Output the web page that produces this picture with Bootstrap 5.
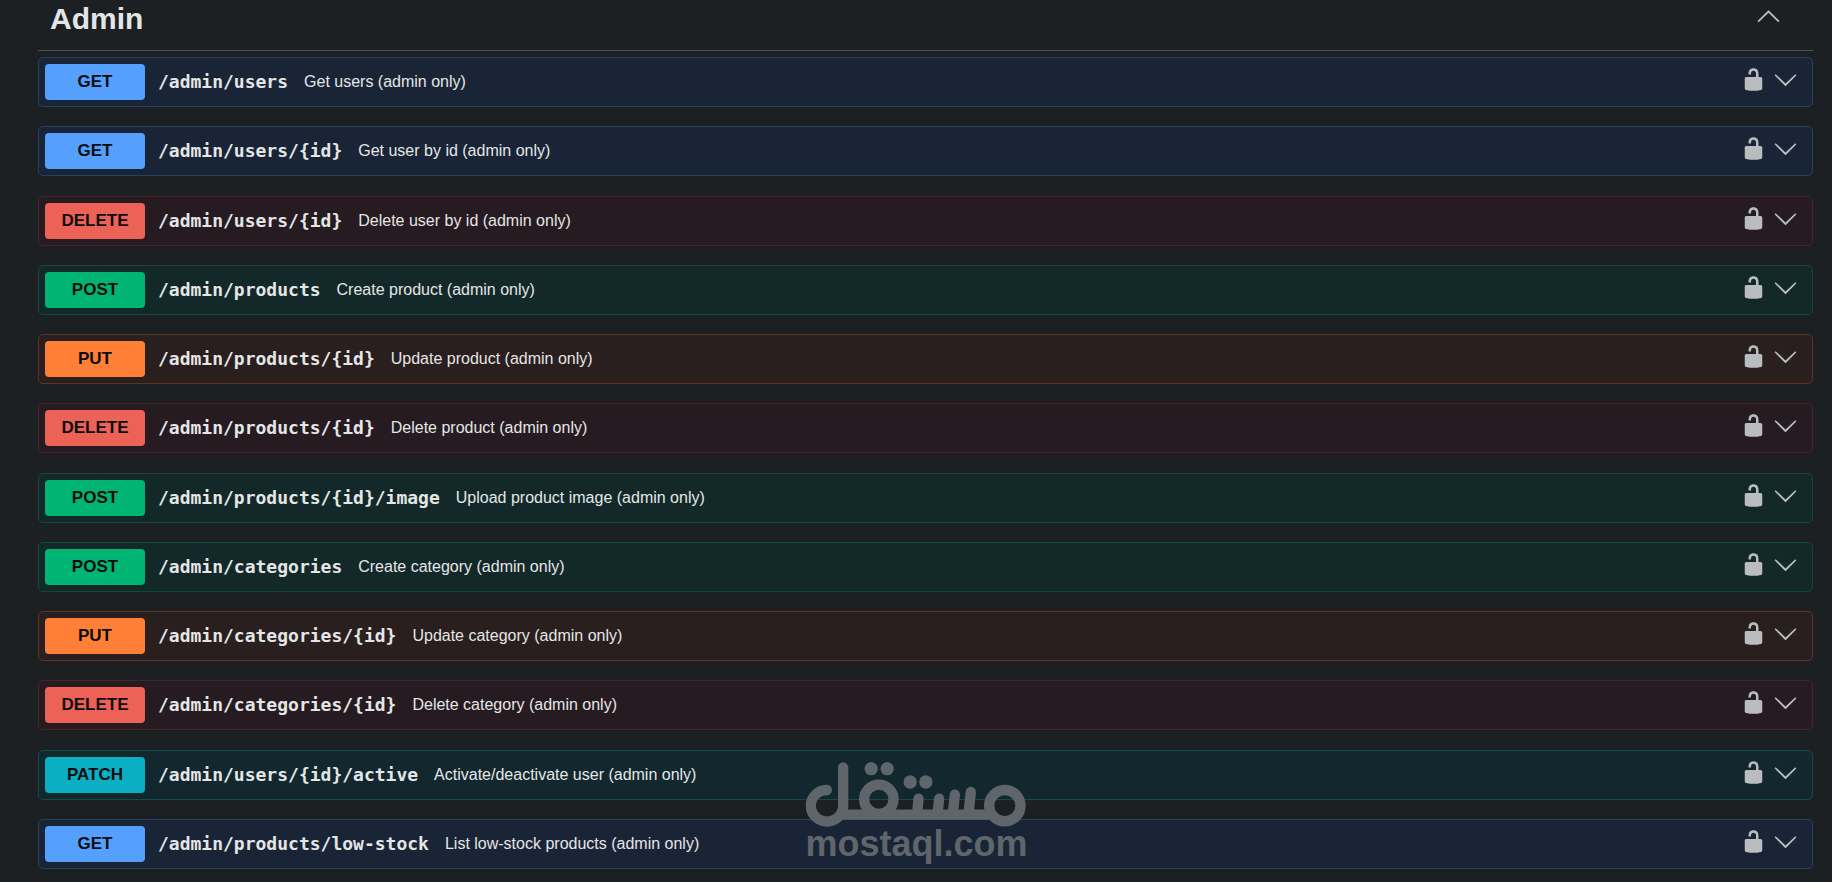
<!DOCTYPE html>
<html lang="en">
<head>
<meta charset="utf-8">
<meta name="viewport" content="width=device-width, initial-scale=1">
<title>API – Admin</title>
<link rel="stylesheet" href="https://cdn.jsdelivr.net/npm/bootstrap@5.3.0/dist/css/bootstrap.min.css">
<style>
  body { background: #1c2022; color: #e4e6e6; font-family: "Liberation Sans", Arial, sans-serif; font-size: 16px; }
  .page-wrap .btn { color: inherit; font-family: inherit; }
  .page-wrap { padding: 0 19px 13px 38px; }
  .tag-head { height: 51px; padding: 0 32px 20px 12px; border-bottom: 1px solid #4b5355; margin-bottom: 6px; }
  .tag-title { font-size: 30px; line-height: 36px; }
  .tag-head .btn, .op-tools { color: #b9bdbf; }
  .op-row { height: 50px; padding: 0 14px 0 6px; border: 1px solid var(--line); border-radius: 5px; background: var(--fill); }
  .op-method { width: 100px; height: 36px; line-height: 36px; border-radius: 4px; background: var(--tone); color: #0c0d0e; font-size: 17px; margin-right: 13px; }
  .op-path { font-family: "DejaVu Sans Mono", monospace; font-size: 18px; line-height: 24px; margin-right: 16px; }
  .op-tools { gap: 7px; padding-bottom: 5px; }
  .ico { width: 25px; height: 25px; fill: currentColor; display: block; }
  .op-get { --tone: #55a0ff; --fill: #192536; --line: #264162; }
  .op-delete { --tone: #ed6257; --fill: #261b20; --line: #4a2325; }
  .op-post { --tone: #00b574; --fill: #132929; --line: #0f4a3a; }
  .op-put { --tone: #ff7f37; --fill: #291f1e; --line: #5a3525; }
  .op-patch { --tone: #0aafc4; --fill: #12282e; --line: #144a4e; }
  .brand-mark { bottom: 22px; width: 221px; color: #5e666b; pointer-events: none; }
  .brand-mark svg { display: block; width: 100%; }
  .brand-name { font-size: 36px; line-height: 33px; }
</style>
</head>
<body>
<svg class="d-none" aria-hidden="true">
  <symbol id="unlocked" viewBox="0 0 20 20"><path d="M15.8 8H14V5.6C14 2.703 12.665 1 10 1 7.334 1 6 2.703 6 5.6V6h2v-.801C8 3.754 8.797 3 10 3c1.203 0 2 .754 2 2.199V8H4c-.553 0-1 .646-1 1.199V17c0 .549.428 1.139.951 1.307l1.197.387C5.672 18.861 6.55 19 7.1 19h5.8c.549 0 1.428-.139 1.951-.307l1.196-.387c.524-.167.953-.757.953-1.306V9.199C17 8.646 16.352 8 15.8 8z"/></symbol>
  <symbol id="down" viewBox="0 0 20 20"><path d="M17.418 6.109c.272-.268.709-.268.979 0s.271.701 0 .969l-7.908 7.83c-.27.268-.707.268-.979 0l-7.908-7.83c-.27-.268-.27-.701 0-.969.271-.268.709-.268.979 0L10 13.25l7.418-7.141z"/></symbol>
  <symbol id="up" viewBox="0 0 20 20"><path d="M17.418 14.908c.272.268.709.268.979 0s.271-.701 0-.969l-7.908-7.83c-.27-.268-.707-.268-.979 0l-7.908 7.83c-.27.268-.27.701 0 .969.271.268.709.268.979 0L10 7.767l7.418 7.141z"/></symbol>
</svg>

<main class="page-wrap d-flex flex-column min-vh-100 position-relative">
  <header class="tag-head d-flex align-items-center justify-content-between">
    <h1 class="tag-title fw-bold m-0 pt-2">Admin</h1>
    <button class="btn p-0 border-0" aria-label="Collapse section"><svg class="ico"><use href="#up"/></svg></button>
  </header>

  <div class="d-flex flex-column flex-grow-1 justify-content-between">
    <div class="op-row op-get d-flex align-items-center">
      <button class="btn p-0 border-0 d-flex align-items-center flex-grow-1 text-start text-nowrap"><span class="op-method fw-bold text-center">GET</span><span class="op-path fw-bold">/admin/users</span><span>Get users (admin only)</span></button>
      <div class="op-tools d-flex"><button class="btn p-0 border-0" aria-label="Authorize"><svg class="ico"><use href="#unlocked"/></svg></button><button class="btn p-0 border-0" aria-label="Expand"><svg class="ico"><use href="#down"/></svg></button></div>
    </div>
    <div class="op-row op-get d-flex align-items-center">
      <button class="btn p-0 border-0 d-flex align-items-center flex-grow-1 text-start text-nowrap"><span class="op-method fw-bold text-center">GET</span><span class="op-path fw-bold">/admin/users/{id}</span><span>Get user by id (admin only)</span></button>
      <div class="op-tools d-flex"><button class="btn p-0 border-0" aria-label="Authorize"><svg class="ico"><use href="#unlocked"/></svg></button><button class="btn p-0 border-0" aria-label="Expand"><svg class="ico"><use href="#down"/></svg></button></div>
    </div>
    <div class="op-row op-delete d-flex align-items-center">
      <button class="btn p-0 border-0 d-flex align-items-center flex-grow-1 text-start text-nowrap"><span class="op-method fw-bold text-center">DELETE</span><span class="op-path fw-bold">/admin/users/{id}</span><span>Delete user by id (admin only)</span></button>
      <div class="op-tools d-flex"><button class="btn p-0 border-0" aria-label="Authorize"><svg class="ico"><use href="#unlocked"/></svg></button><button class="btn p-0 border-0" aria-label="Expand"><svg class="ico"><use href="#down"/></svg></button></div>
    </div>
    <div class="op-row op-post d-flex align-items-center">
      <button class="btn p-0 border-0 d-flex align-items-center flex-grow-1 text-start text-nowrap"><span class="op-method fw-bold text-center">POST</span><span class="op-path fw-bold">/admin/products</span><span>Create product (admin only)</span></button>
      <div class="op-tools d-flex"><button class="btn p-0 border-0" aria-label="Authorize"><svg class="ico"><use href="#unlocked"/></svg></button><button class="btn p-0 border-0" aria-label="Expand"><svg class="ico"><use href="#down"/></svg></button></div>
    </div>
    <div class="op-row op-put d-flex align-items-center">
      <button class="btn p-0 border-0 d-flex align-items-center flex-grow-1 text-start text-nowrap"><span class="op-method fw-bold text-center">PUT</span><span class="op-path fw-bold">/admin/products/{id}</span><span>Update product (admin only)</span></button>
      <div class="op-tools d-flex"><button class="btn p-0 border-0" aria-label="Authorize"><svg class="ico"><use href="#unlocked"/></svg></button><button class="btn p-0 border-0" aria-label="Expand"><svg class="ico"><use href="#down"/></svg></button></div>
    </div>
    <div class="op-row op-delete d-flex align-items-center">
      <button class="btn p-0 border-0 d-flex align-items-center flex-grow-1 text-start text-nowrap"><span class="op-method fw-bold text-center">DELETE</span><span class="op-path fw-bold">/admin/products/{id}</span><span>Delete product (admin only)</span></button>
      <div class="op-tools d-flex"><button class="btn p-0 border-0" aria-label="Authorize"><svg class="ico"><use href="#unlocked"/></svg></button><button class="btn p-0 border-0" aria-label="Expand"><svg class="ico"><use href="#down"/></svg></button></div>
    </div>
    <div class="op-row op-post d-flex align-items-center">
      <button class="btn p-0 border-0 d-flex align-items-center flex-grow-1 text-start text-nowrap"><span class="op-method fw-bold text-center">POST</span><span class="op-path fw-bold">/admin/products/{id}/image</span><span>Upload product image (admin only)</span></button>
      <div class="op-tools d-flex"><button class="btn p-0 border-0" aria-label="Authorize"><svg class="ico"><use href="#unlocked"/></svg></button><button class="btn p-0 border-0" aria-label="Expand"><svg class="ico"><use href="#down"/></svg></button></div>
    </div>
    <div class="op-row op-post d-flex align-items-center">
      <button class="btn p-0 border-0 d-flex align-items-center flex-grow-1 text-start text-nowrap"><span class="op-method fw-bold text-center">POST</span><span class="op-path fw-bold">/admin/categories</span><span>Create category (admin only)</span></button>
      <div class="op-tools d-flex"><button class="btn p-0 border-0" aria-label="Authorize"><svg class="ico"><use href="#unlocked"/></svg></button><button class="btn p-0 border-0" aria-label="Expand"><svg class="ico"><use href="#down"/></svg></button></div>
    </div>
    <div class="op-row op-put d-flex align-items-center">
      <button class="btn p-0 border-0 d-flex align-items-center flex-grow-1 text-start text-nowrap"><span class="op-method fw-bold text-center">PUT</span><span class="op-path fw-bold">/admin/categories/{id}</span><span>Update category (admin only)</span></button>
      <div class="op-tools d-flex"><button class="btn p-0 border-0" aria-label="Authorize"><svg class="ico"><use href="#unlocked"/></svg></button><button class="btn p-0 border-0" aria-label="Expand"><svg class="ico"><use href="#down"/></svg></button></div>
    </div>
    <div class="op-row op-delete d-flex align-items-center">
      <button class="btn p-0 border-0 d-flex align-items-center flex-grow-1 text-start text-nowrap"><span class="op-method fw-bold text-center">DELETE</span><span class="op-path fw-bold">/admin/categories/{id}</span><span>Delete category (admin only)</span></button>
      <div class="op-tools d-flex"><button class="btn p-0 border-0" aria-label="Authorize"><svg class="ico"><use href="#unlocked"/></svg></button><button class="btn p-0 border-0" aria-label="Expand"><svg class="ico"><use href="#down"/></svg></button></div>
    </div>
    <div class="op-row op-patch d-flex align-items-center">
      <button class="btn p-0 border-0 d-flex align-items-center flex-grow-1 text-start text-nowrap"><span class="op-method fw-bold text-center">PATCH</span><span class="op-path fw-bold">/admin/users/{id}/active</span><span>Activate/deactivate user (admin only)</span></button>
      <div class="op-tools d-flex"><button class="btn p-0 border-0" aria-label="Authorize"><svg class="ico"><use href="#unlocked"/></svg></button><button class="btn p-0 border-0" aria-label="Expand"><svg class="ico"><use href="#down"/></svg></button></div>
    </div>
    <div class="op-row op-get d-flex align-items-center">
      <button class="btn p-0 border-0 d-flex align-items-center flex-grow-1 text-start text-nowrap"><span class="op-method fw-bold text-center">GET</span><span class="op-path fw-bold">/admin/products/low-stock</span><span>List low-stock products (admin only)</span></button>
      <div class="op-tools d-flex"><button class="btn p-0 border-0" aria-label="Authorize"><svg class="ico"><use href="#unlocked"/></svg></button><button class="btn p-0 border-0" aria-label="Expand"><svg class="ico"><use href="#down"/></svg></button></div>
    </div>
  </div>

  <!-- Watermark over the list -->
  <div class="brand-mark position-absolute start-50 translate-middle-x text-center">
    <svg viewBox="77 66 663 198" fill="none" stroke="currentColor" stroke-width="31" stroke-linecap="round" aria-hidden="true">
      <path d="M141 153A48 47 0 0 0 93 200A48 47 0 0 0 190 200V85"/>
      <path d="M182 227H645" stroke-linecap="butt"/>
      <circle cx="297" cy="181" r="44"/>
      <path d="M412 224L416 179M473 224L478 179M519 224L525 167M566 224L573 159"/>
      <circle cx="675" cy="200" r="47"/>
      <g fill="currentColor" stroke="none"><circle cx="274" cy="89" r="20"/><circle cx="322" cy="89" r="20"/><circle cx="391" cy="129" r="20"/><circle cx="438" cy="129" r="20"/></g>
    </svg>
    <div class="brand-name fw-bold">mostaql.com</div>
  </div>
</main>
<script src="https://cdn.jsdelivr.net/npm/bootstrap@5.3.0/dist/js/bootstrap.bundle.min.js"></script>
</body>
</html>
